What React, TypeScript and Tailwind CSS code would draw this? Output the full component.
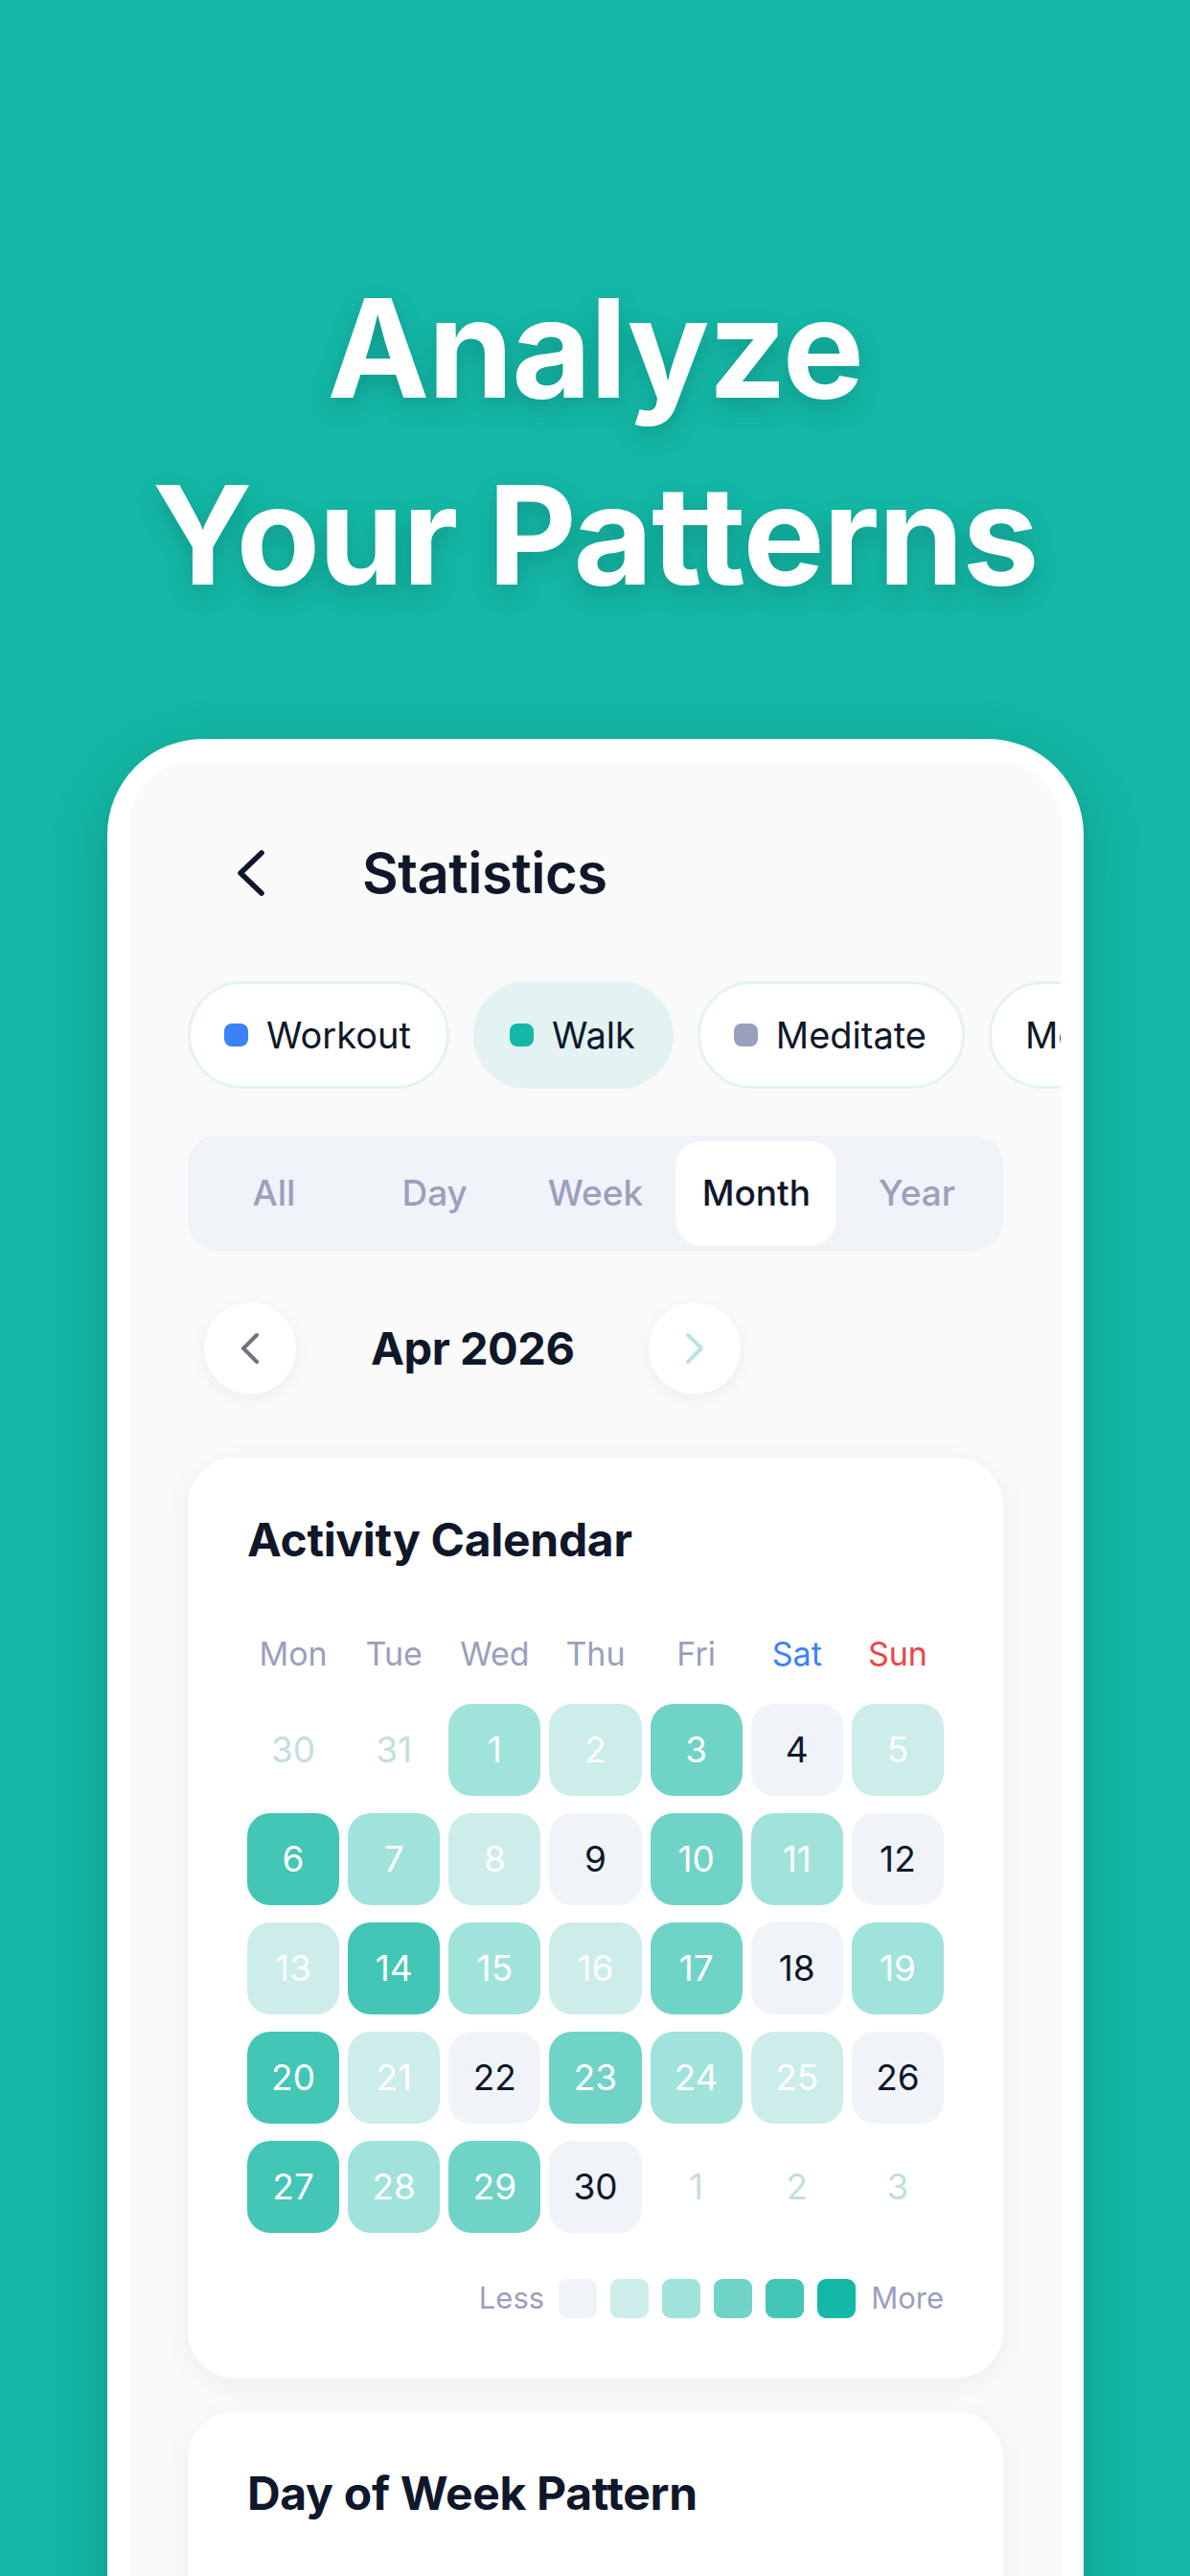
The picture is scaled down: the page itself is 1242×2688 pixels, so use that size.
import React from "react";

const chips = [
  { label: "Workout", dot: "bg-[#3b82f6]", active: false },
  { label: "Walk", dot: "bg-[#14b8a6]", active: true },
  { label: "Meditate", dot: "bg-[#9a9fbd]", active: false },
  { label: "More", dot: "", active: false },
];

const tabs = ["All", "Day", "Week", "Month", "Year"];

const weekdays = [
  { d: "Mon", c: "text-[#9aa0bd]" },
  { d: "Tue", c: "text-[#9aa0bd]" },
  { d: "Wed", c: "text-[#9aa0bd]" },
  { d: "Thu", c: "text-[#9aa0bd]" },
  { d: "Fri", c: "text-[#9aa0bd]" },
  { d: "Sat", c: "text-[#3b82f6]" },
  { d: "Sun", c: "text-[#ef4444]" },
];

const levels = [
  "bg-[#f0f4f8] text-[#0f172a]",
  "bg-[#ccede9] text-white",
  "bg-[#a0e3da] text-white",
  "bg-[#70d3c7] text-white",
  "bg-[#43c6b6] text-white",
  "bg-[#14b8a6] text-white",
];

// day -> intensity level for April
const activity: Record<number, number> = {
  1: 2, 2: 1, 3: 3, 4: 0, 5: 1,
  6: 4, 7: 2, 8: 1, 9: 0, 10: 3, 11: 2, 12: 0,
  13: 1, 14: 4, 15: 2, 16: 1, 17: 3, 18: 0, 19: 2,
  20: 4, 21: 1, 22: 0, 23: 3, 24: 2, 25: 1, 26: 0,
  27: 4, 28: 2, 29: 3, 30: 0,
};

type Cell = { n: number; out: boolean };

const cells: Cell[] = [
  { n: 30, out: true },
  { n: 31, out: true },
  ...Array.from({ length: 30 }, (_, i) => ({ n: i + 1, out: false })),
  { n: 1, out: true },
  { n: 2, out: true },
  { n: 3, out: true },
];

const Chevron = ({ dir, className }: { dir: "left" | "right"; className: string }) => (
  <svg viewBox="0 0 20 34" className={className} fill="none">
    <polyline
      points={dir === "left" ? "17,3 3,17 17,31" : "3,3 17,17 3,31"}
      stroke="currentColor"
      strokeWidth="4"
      strokeLinecap="round"
      strokeLinejoin="round"
    />
  </svg>
);

const App = () => {
  return (
    <div className="w-[1242px] h-[2688px] overflow-hidden bg-[#14b8a6] font-['Inter',sans-serif]">
      <h1 className="pt-[265px] text-center text-white font-bold text-[143px] leading-[195px] tracking-[-1.5px] [text-shadow:0_10px_24px_rgba(0,60,55,0.25)]">
        Analyze
        <br />
        Your Patterns
      </h1>

      <div className="mt-[116px] ml-[112px] w-[1019px] h-[2000px] rounded-t-[100px] bg-white px-[24px] pt-[24px] shadow-[0_20px_60px_rgba(0,50,45,0.25)]">
        <div className="h-full rounded-t-[64px] bg-[#fafafa] overflow-hidden">
          {/* header */}
          <div className="mt-[68px] flex h-[96px] items-center pl-[111px]">
            <svg viewBox="0 0 30 48" className="h-[48px] w-[30px]" fill="none">
              <polyline
                points="26,3 4,24 26,45"
                stroke="#0f172a"
                strokeWidth="5.5"
                strokeLinecap="round"
                strokeLinejoin="round"
              />
            </svg>
            <span className="ml-[101px] text-[58px] font-semibold text-[#0f172a] tracking-[-0.5px]">
              Statistics
            </span>
          </div>

          {/* category chips */}
          <div className="mt-[65px] flex gap-[25px] pl-[60px] overflow-hidden">
            {chips.map((c) => (
              <div
                key={c.label}
                className={`flex h-[112px] shrink-0 items-center rounded-full border-[3px] pl-[35px] pr-[37px] ${
                  c.active ? "border-[#e3f3f1] bg-[#e3f3f1]" : "border-[#e3f3f1] bg-white"
                }`}
              >
                {c.dot && <span className={`mr-[19px] h-[24px] w-[25px] rounded-[8px] ${c.dot}`} />}
                <span className="text-[38px] text-[#0f172a]">{c.label}</span>
              </div>
            ))}
          </div>

          <div className="px-[60px]">
            {/* period tabs */}
            <div className="mt-[49px] grid h-[120px] grid-cols-5 rounded-[30px] bg-[#f0f3f8] p-[6px]">
              {tabs.map((t) => (
                <div
                  key={t}
                  className={`flex items-center justify-center rounded-[26px] text-[37px] font-medium ${
                    t === "Month" ? "bg-white text-[#0f172a]" : "text-[#9aa0bd]"
                  }`}
                >
                  {t}
                </div>
              ))}
            </div>

            {/* month nav */}
            <div className="mt-[54px] flex items-center pl-[17px]">
              <div className="flex h-[96px] w-[96px] items-center justify-center rounded-full bg-white shadow-[0_4px_16px_rgba(15,23,42,0.06)]">
                <Chevron dir="left" className="h-[34px] w-[20px] text-[#6b7280]" />
              </div>
              <span className="mx-[78px] text-[47px] font-bold text-[#0f172a] tracking-[-0.5px]">
                Apr 2026
              </span>
              <div className="flex h-[96px] w-[96px] items-center justify-center rounded-full bg-white shadow-[0_4px_16px_rgba(15,23,42,0.06)]">
                <Chevron dir="right" className="h-[34px] w-[20px] text-[#b9e4df]" />
              </div>
            </div>

            {/* calendar card */}
            <div className="mt-[66px] rounded-[50px] bg-white px-[62px] pt-[58px] pb-[60px] shadow-[0_6px_28px_rgba(15,23,42,0.06)]">
              <h2 className="text-[48px] leading-[56px] font-bold text-[#0f172a] tracking-[-0.3px]">
                Activity Calendar
              </h2>
              <div className="mt-[71px] grid grid-cols-7 gap-x-[9px]">
                {weekdays.map((w) => (
                  <div key={w.d} className={`text-center text-[34px] leading-[40px] ${w.c}`}>
                    {w.d}
                  </div>
                ))}
              </div>
              <div className="mt-[32px] grid grid-cols-7 gap-x-[9px] gap-y-[18px]">
                {cells.map((c, i) => (
                  <div
                    key={i}
                    className={`flex h-[96px] items-center justify-center rounded-[24px] text-[37px] ${
                      c.out ? "text-[#c3dfe0]" : levels[activity[c.n]]
                    }`}
                  >
                    {c.n}
                  </div>
                ))}
              </div>
              <div className="mt-[45px] flex items-center justify-end">
                <span className="mr-[15px] text-[31px] text-[#9aa0bd]">Less</span>
                <div className="flex gap-[14px]">
                  {levels.map((l, i) => (
                    <span key={i} className={`h-[41px] w-[40px] rounded-[9px] ${l.split(" ")[0]}`} />
                  ))}
                </div>
                <span className="ml-[16px] text-[31px] text-[#9aa0bd]">More</span>
              </div>
            </div>

            {/* day of week card */}
            <div className="mt-[34px] h-[600px] rounded-[50px] bg-white px-[62px] pt-[58px] shadow-[0_6px_28px_rgba(15,23,42,0.06)]">
              <h2 className="text-[48px] leading-[56px] font-bold text-[#0f172a] tracking-[-0.3px]">
                Day of Week Pattern
              </h2>
            </div>
          </div>
        </div>
      </div>
    </div>
  );
};

export default App;
